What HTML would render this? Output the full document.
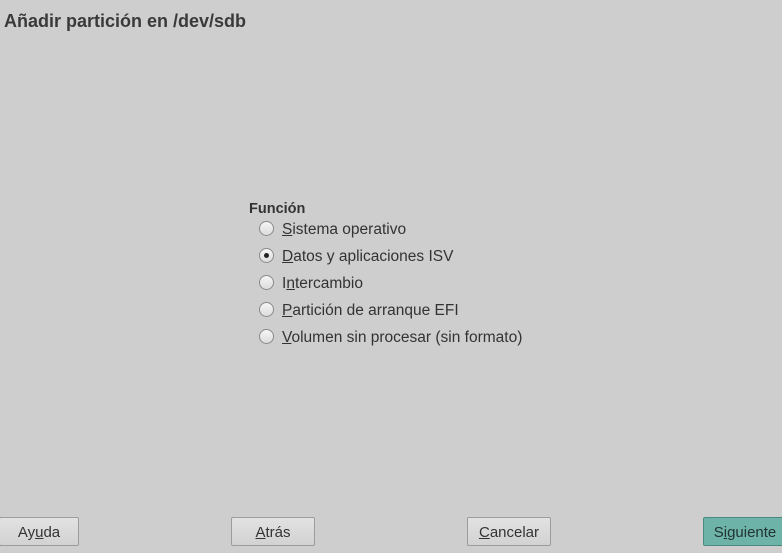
<!DOCTYPE html>
<html><head><meta charset="utf-8"><style>
body{margin:0;width:782px;height:553px;background:#cecece;font-family:"Liberation Sans",sans-serif;color:#333;position:relative;overflow:hidden}
.t{position:absolute;left:4px;top:11px;font-size:18px;font-weight:bold;color:#3a3a3a}
.h{position:absolute;left:249px;top:201px;font-size:14.5px;font-weight:bold;color:#333}
.r{position:absolute;left:259px;font-size:15.5px;color:#333;height:20px;line-height:20px}
.r i{position:absolute;left:0;top:3px;width:13px;height:13px;border:1px solid #8a8a8a;border-radius:50%;background:linear-gradient(#f6f6f6,#dcdcdc)}
.r span{position:absolute;left:23px;top:2px;white-space:nowrap}
.r b{position:absolute;left:5px;top:8px;width:5px;height:5px;border-radius:50%;background:#222}
.b{position:absolute;top:517px;height:27px;border:1px solid #9c9c9c;border-radius:2px;background:linear-gradient(#e2e2e2,#d2d2d2);font-size:15px;line-height:30px;text-align:center;color:#333}
</style></head><body>
<div class="t">Añadir partición en /dev/sdb</div>
<div class="h">Función</div>
<div class="r" style="top:218px"><i></i><span><u>S</u>istema operativo</span></div>
<div class="r" style="top:245px"><i></i><b></b><span><u>D</u>atos y aplicaciones ISV</span></div>
<div class="r" style="top:272px"><i></i><span>I<u>n</u>tercambio</span></div>
<div class="r" style="top:299px"><i></i><span><u>P</u>artición de arranque EFI</span></div>
<div class="r" style="top:326px"><i></i><span><u>V</u>olumen sin procesar (sin formato)</span></div>
<div class="b" style="left:-1px;width:78px">Ay<u>u</u>da</div>
<div class="b" style="left:231px;width:82px"><u>A</u>trás</div>
<div class="b" style="left:467px;width:82px"><u>C</u>ancelar</div>
<div class="b" style="left:703px;width:82px;background:#6eb3a8;border-color:#4a8a80;color:#233">S<u>i</u>guiente</div>
</body></html>
